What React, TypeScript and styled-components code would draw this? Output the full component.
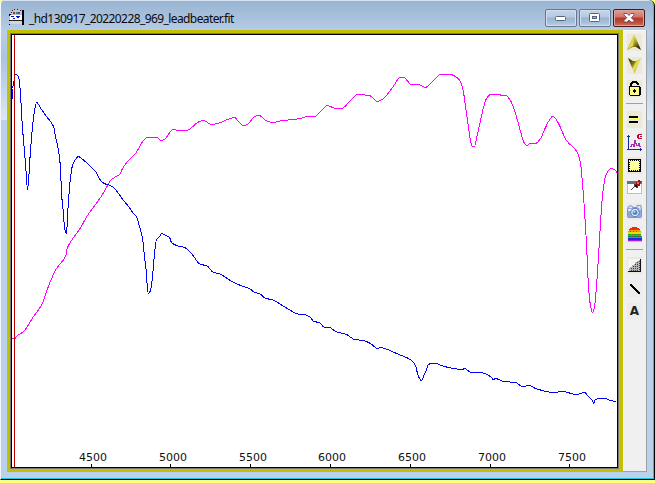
import React from 'react';
import styled, { createGlobalStyle } from 'styled-components';

const GlobalStyle = createGlobalStyle`
  html, body { margin: 0; padding: 0; }
  body { width: 655px; height: 483px; overflow: hidden; background: #ffff80; }
  svg { display: block; }
`;

const Desktop = styled.div`
  box-sizing: border-box;
  width: 655px;
  height: 483px;
  background: #ffff7c;
`;

const WindowFrame = styled.section`
  box-sizing: border-box;
  width: 655px;
  height: 480px;
  display: flex;
  flex-direction: column;
  padding: 0 6px 0 6px;
  border-left: 1px solid #f3f7fb;
  border-right: 1px solid #000;
  border-bottom: 1px solid #000;
  border-radius: 4px 6px 0 0;
  background: linear-gradient(#98b4d1 0, #a9c1dd 18px, #b8cee8 32px, #a9c4e1 58px, #dce7f4 120px, #b9d1ea 120px);
  box-shadow: inset -1px -1px #1dc4e6, inset 0 1px #d7e3f0;
`;

const TitleBar = styled.header`
  display: flex;
  align-items: flex-start;
  height: 30px;
  box-sizing: border-box;
  padding: 9px 3px 0 2px;
`;

const Title = styled.h1`
  flex: 1;
  margin: 1px 0 0 5px;
  font: 400 12px/18px "Noto Sans", "Open Sans", sans-serif;
  letter-spacing: -0.59px;
  color: #0a0a0a;
  white-space: nowrap;
`;

const Controls = styled.div`
  display: flex;
  gap: 2px;
`;

const ControlButton = styled.button<{ $danger?: boolean }>`
  width: 32px;
  height: 18px;
  padding: 0;
  box-sizing: border-box;
  display: flex;
  align-items: center;
  justify-content: center;
  border: 1px solid ${p => (p.$danger ? '#46171d' : '#66788f')};
  border-radius: 2px;
  background: ${p => p.$danger
    ? 'linear-gradient(#dfa093 0, #cf7568 7px, #b33b2a 8px, #bb4b36 12px, #cc7558 100%)'
    : 'linear-gradient(#c5d6ea 0, #b5c9e0 7px, #9bb5d1 8px, #a5bed9 12px, #bdd1e8 100%)'};
  box-shadow: inset 0 0 0 1px ${p => (p.$danger ? '#e0a29a' : '#d0deed')};
`;

const Content = styled.main`
  display: flex;
  height: 442px;
`;

const PlotFrame = styled.div`
  box-sizing: border-box;
  width: 616px;
  height: 442px;
  border: solid #c2c000;
  border-width: 3px 4px 3px 3px;
`;

const PlotBevel = styled.div`
  box-sizing: border-box;
  height: 436px;
  border: 1px solid #777;
`;

const PlotArea = styled.div`
  box-sizing: border-box;
  height: 434px;
  border: 1px solid #000;
  background: #fff;
`;

const ToolStrip = styled.nav`
  box-sizing: border-box;
  width: 24px;
  height: 442px;
  padding-top: 1px;
  display: flex;
  flex-direction: column;
  background: #f0f0f0;
  border-right: 1px solid #a0a0a0;
  border-bottom: 1px solid #a0a0a0;
  box-shadow: inset 1px 1px #fafafa;
`;

const ToolButton = styled.button`
  width: 23px;
  height: 23px;
  flex: none;
  margin: 0;
  padding: 3px 4px;
  border: 0;
  background: none;
`;

const ToolSeparator = styled.div`
  height: 1px;
  margin: 3px 3px 4px 3px;
  background: #a0a0a0;
`;

const continuum =
  '11,338 14,338 17,335 23,331 33,316 42,303 46,291 52,276 56,268 65,256 67,247 71,240 79,229 87,215 100,197 106,187 110,180 114,177 119,174 122,168 128,160 135,153 143,140 147,137 156,137 161,140 165,138 170,131 173,129 178,130 186,130 190,128 197,122 203,120 211,124 220,122 227,119 234,117 238,121 243,125 247,124 254,116 259,115 265,120 272,122 282,120 293,119 300,118 307,116 314,116 320,111 327,105 330,106 335,108 341,108 350,100 357,94 369,95 377,101 380,100 385,96 392,87 400,77 403,77 411,84 418,84 425,87 428,85 435,78 440,74 450,74 455,76 460,81 463,92 465,106 468,127 470,140 472,146 474,146 476,138 480,120 483,107 486,98 490,94 499,94 501,95 505,95 510,100 515,113 520,131 523,141 526,145 530,143 535,143 540,138 545,127 548,121 552,116 555,118 559,125 566,140 577,152 580,163 582,183 584,210 586,243 588,286 590,305 592,312 594,306 596,286 598,256 600,223 602,195 605,176 608,170 610,168 614,169 617,173';

const spectrum =
  '12,88 13,83 15,74 18,76 20,93 21,113 23,140 25,163 27,189 28,180 30,150 32,126 34,110 36,102 41,109 46,116 53,126 55,136 58,150 60,167 61,193 63,213 64,227 66,233 67,217 68,200 70,177 72,165 75,159 78,156 81,158 87,163 95,171 101,181 106,184 110,185 114,188 123,200 128,206 133,213 136,216 139,226 142,238 144,256 146,273 147,290 148,293 150,290 152,276 154,253 156,239 159,236 161,233 165,235 169,237 171,242 176,245 184,247 191,253 200,264 206,265 213,272 218,273 233,282 243,286 249,288 254,292 259,293 265,298 271,299 285,307 300,314 303,314 310,317 313,321 319,322 324,327 329,327 335,331 346,334 354,339 363,340 370,343 377,348 380,347 387,349 396,353 408,358 412,361 415,365 417,373 419,378 421,380 423,376 426,369 428,364 431,363 435,363 441,365 448,367 462,369 464,368 466,369 471,372 480,372 490,376 493,379 495,378 503,381 515,382 522,386 529,385 535,388 553,392 562,391 576,394 580,393 584,392 588,396 592,400 593,403 595,399 599,398 605,398 610,400 616,401';

/** Monotone cubic interpolation through points of increasing x. */
function smoothPath(points: string) {
  const p = points.split(' ').map(s => s.split(',').map(Number));
  const slope = p.slice(1).map((q, i) => (q[1] - p[i][1]) / (q[0] - p[i][0]));
  const tangent = p.map((_, i) => {
    if (i === 0) return slope[0];
    if (i === p.length - 1) return slope[i - 1];
    const a = slope[i - 1];
    const b = slope[i];
    return a * b <= 0 ? 0 : (2 * a * b) / (a + b);
  });
  let d = `M${p[0][0]} ${p[0][1]}`;
  for (let i = 1; i < p.length; i++) {
    const h = (p[i][0] - p[i - 1][0]) / 3;
    d += `C${p[i - 1][0] + h} ${p[i - 1][1] + h * tangent[i - 1]} ${p[i][0] - h} ${p[i][1] - h * tangent[i]} ${p[i][0]} ${p[i][1]}`;
  }
  return d;
}

const ticks = [
  { label: '4500', x: 91, text: 79 },
  { label: '5000', x: 170, text: 159 },
  { label: '5500', x: 250, text: 239 },
  { label: '6000', x: 330, text: 318 },
  { label: '6500', x: 410, text: 398 },
  { label: '7000', x: 490, text: 478 },
  { label: '7500', x: 569, text: 558 },
];

const Chart = styled.svg`
  text {
    font: 11px "DejaVu Sans", sans-serif;
    fill: #111;
  }
`;

function SpectrumChart() {
  return (
    <Chart width="605" height="432" viewBox="12 35 605 432">
      <g shapeRendering="crispEdges" fill="none" transform="translate(.5 .5)">
        <path d={smoothPath(continuum)} stroke="#f0f" />
        <path d={'M12 98V88' + smoothPath(spectrum)} stroke="#00f" />
        <path d="M14 34V467" stroke="#c00000" />
        {ticks.map(t => <path key={t.label} d={`M${t.x} 463.5V467`} stroke="#000" />)}
      </g>
      {ticks.map(t => <text key={t.label} x={t.text} y="461">{t.label}</text>)}
    </Chart>
  );
}

function AppIcon() {
  return (
    <svg width="15" height="16" viewBox="0 0 15 16" shapeRendering="crispEdges">
      <path d="M3 1h9l2 4H1z" fill="#c9c9c9" />
      <path d="M3 1h1v1H3zM5 0h1v1H5zM8 0h1v1H8zM11 1h1v1h-1zM2 3h1v1H2z" fill="#222" />
      <path d="M4 3h2v2H4z" fill="#d02020" />
      <path d="M6 3h1v2H6z" fill="#e0d000" />
      <path d="M7 3h2v2H7z" fill="#20a040" />
      <path d="M9 3h2v2H9z" fill="#a020c0" />
      <path d="M0 5h2v1H0zM13 1h2v15h-2z" fill="#000" />
      <path d="M0 6h1v1H0zM0 11h1v1H0zM0 15h1v1H0z" fill="#000" />
      <path d="M1 6h12v5H1z" fill="#fff" />
      <path d="M1 11h12v1H1z" fill="#222" />
      <path d="M1 12h12v3H1z" fill="#d5d5d5" />
      <path d="M2 7h3v1H2zM7 7h4v1H7zM4 9h2v1H4zM8 8h2v1H8z" fill="#0010d0" />
    </svg>
  );
}

function Icon({ children, tile }: { children: React.ReactNode; tile?: string }) {
  return (
    <svg width="15" height="17" viewBox="0 0 15 17" shapeRendering="crispEdges">
      {tile && <rect width="15" height="17" fill={tile} />}
      {children}
    </svg>
  );
}

const warm = '#ece9d8';

const ArrowUpIcon = () => (
  <Icon tile={warm}>
    <defs>
      <linearGradient id="arrowUp" x1="0" y1="0" x2="1" y2="1">
        <stop offset=".2" stopColor="#f5f27a" /><stop offset=".55" stopColor="#aaa02c" /><stop offset=".85" stopColor="#292400" />
      </linearGradient>
    </defs>
    <path d="M7 0L14 16L9 13H6L0 16Z" fill="url(#arrowUp)" shapeRendering="auto" />
    <path d="M7 1L1 15L6 12Z" fill="#e0d84c" shapeRendering="auto" />
  </Icon>
);

const ArrowDownIcon = () => (
  <Icon tile={warm}>
    <defs>
      <linearGradient id="arrowDown" x1="0" y1="0" x2="1" y2=".7">
        <stop offset=".1" stopColor="#3a3500" /><stop offset=".45" stopColor="#80781c" /><stop offset=".6" stopColor="#eee64d" /><stop offset="1" stopColor="#a49b35" />
      </linearGradient>
    </defs>
    <path d="M1 1L6 4H9L14 1L7.5 16.5Z" fill="url(#arrowDown)" shapeRendering="auto" />
  </Icon>
);

const LockIcon = () => (
  <Icon tile={warm}>
    <path d="M4 6V4L6 2H9L11 4V5" fill="none" stroke="#000" strokeWidth="1.6" />
    <path d="M2 6h11v1h1v8h-1v1H3v-1H2z" fill="#000" />
    <path d="M3 7h9v8H3z" fill="#ff8" />
    <path d="M7 9h1v1h1v2H8v1H7v-1H6v-2h1z" fill="#000" />
  </Icon>
);

const EqualsIcon = () => (
  <Icon tile={warm}>
    <path d="M3 7h9v1H3zM3 12h9v1H3z" fill="#ff6" />
    <path d="M2 5h9v2H2zM2 10h9v2H2z" fill="#000" />
  </Icon>
);

const PlotIcon = () => (
  <Icon>
    <path d="M1.5 1V16M0 15.5H15M0 2.5H3M13.5 14v3" fill="none" stroke="#142a9c" />
    <path d="M3 12.5H4.5V10.5H6V12H7.5V6H8.5V9.5H9.5V11H11V9.5H12V12H14" fill="none" stroke="#b028b0" />
    <path d="M11 0h4v1h-3v3h3v1h-4V4h-1V1h1z" fill="#c00030" />
    <path d="M13 2h2v1h-2z" fill="#c00030" />
  </Icon>
);

const SelectIcon = () => (
  <Icon tile={warm}>
    <path d="M1 2h13v13H1z" fill="#000" />
    <path d="M2 3h11v11H2z" fill="#ff9" />
    <path d="M2.5 3.5H12.5V13.5H2.5Z" fill="none" stroke="#000" strokeDasharray="1 1" />
  </Icon>
);

const PinIcon = () => (
  <Icon>
    <path d="M0 1h15v13H0z" fill="#c0c0c0" />
    <path d="M0 1h15v3H0z" fill="#5f7483" />
    <path d="M1 4h13v9H1z" fill="#fff" />
    <path d="M4 10L8 6" stroke="#444" />
    <path d="M7 4h2V2h2V0h2v1h1v2h-1v3h-2v2H9V7H8V6H7z" fill="#981818" />
    <path d="M10 2h2v2h-2z" fill="#eb6464" />
    <path d="M8 5h2v2H8z" fill="#350505" />
  </Icon>
);

const CameraIcon = () => (
  <Icon tile="#ebebed">
    <g shapeRendering="auto">
      <rect x=".5" y="4.5" width="14" height="10" rx="1" fill="#91a9df" stroke="#8292cc" />
      <path d="M1 5L2 3H5L6 5M10 5V2.5H14V5" fill="#dbe6ff" stroke="#8996c8" />
      <path d="M1 6H6V8H1Z" fill="#dce8ff" />
      <circle cx="8" cy="9.5" r="4.2" fill="#e4edfa" stroke="#6475aa" />
      <circle cx="8" cy="9.5" r="2.5" fill="#4d87bd" />
      <circle cx="7.4" cy="8.7" r="1.1" fill="#a4e2f5" />
      <circle cx="13" cy="6" r=".8" fill="#fff" />
    </g>
  </Icon>
);

const RainbowIcon = () => (
  <Icon tile="#ebebeb">
    <path d="M5 1h5v1h2v1h1v1H2V3h1V2h2z" fill="#e52c18" />
    <path d="M2 4h11v1h1v1H1V5h1z" fill="#f9a000" />
    <path d="M1 6h13v2H1z" fill="#e4df00" />
    <path d="M1 8h13v2H1z" fill="#26bc3a" />
    <path d="M1 10h14v1H1z" fill="#168c54" />
    <path d="M1 11h14v1H1z" fill="#00afe8" />
    <path d="M1 12h14v2H1z" fill="#1630ea" />
    <path d="M1 14h14v1H1z" fill="#a020dc" />
    <path d="M1 15h14v1H1z" fill="#e4a5e9" />
    <path d="M3 5.5H12M2 8.5H13M2 10.5H13" stroke="#695c37" strokeDasharray="1 2" />
  </Icon>
);

const DitherIcon = () => (
  <Icon tile={warm}>
    <path d="M1 2h13v13H1z" fill="#f5f5f5" />
    <path d="M13 3V14H2V11H3V10H5V8H7V7H8V5H10V4H12V3Z" fill="#b2b2b2" />
    <path d="M12.5 4V14M10.5 5V14M8.5 7V14M6.5 9V14M4.5 11V14" stroke="#444" strokeDasharray="1 1" />
    <path d="M13.5 2V15M1 14.5H14" stroke="#111" />
  </Icon>
);

const LineIcon = () => (
  <Icon tile="#ececec">
    <path d="M3 4h2v1h1v1h1v1h1v1h1v1h1v1h1v1h1v1h1v2h-2v-1h-1v-1H9v-1H8v-1H7V9H6V8H5V7H4V6H3z" fill="#000" />
  </Icon>
);

const Letter = styled.span`
  display: block;
  width: 15px;
  height: 17px;
  background: #ececec;
  color: #222;
  text-align: center;
  font: 700 12px/17px "DejaVu Sans", sans-serif;
`;

export default function App() {
  return (
    <Desktop>
      <GlobalStyle />
      <WindowFrame>
        <TitleBar>
          <AppIcon />
          <Title>_hd130917_20220228_969_leadbeater.fit</Title>
          <Controls>
            <ControlButton aria-label="Minimize">
              <svg width="12" height="6" viewBox="0 0 12 6"><rect x=".5" y="1.5" width="10" height="4" rx="1" fill="#fff" stroke="#566579" /></svg>
            </ControlButton>
            <ControlButton aria-label="Restore">
              <svg width="12" height="10" viewBox="0 0 12 10"><rect x=".5" y=".5" width="10" height="8" rx="1" fill="#fff" stroke="#566579" /><rect x="3.5" y="3.5" width="4" height="2" fill="#9bb5d1" stroke="#566579" /></svg>
            </ControlButton>
            <ControlButton $danger aria-label="Close">
              <svg width="12" height="10" viewBox="0 0 12 10"><path d="M1 .5H4L6 2.5L8 .5H11V2L8.3 4.7L11 7.5V9H8L6 7L4 9H1V7.5L3.7 4.7L1 2Z" fill="#fff" stroke="#673e4b" strokeWidth=".8" /></svg>
            </ControlButton>
          </Controls>
        </TitleBar>
        <Content>
          <PlotFrame><PlotBevel><PlotArea><SpectrumChart /></PlotArea></PlotBevel></PlotFrame>
          <ToolStrip>
            <ToolButton><ArrowUpIcon /></ToolButton>
            <ToolButton><ArrowDownIcon /></ToolButton>
            <ToolButton><LockIcon /></ToolButton>
            <ToolSeparator />
            <ToolButton><EqualsIcon /></ToolButton>
            <ToolButton><PlotIcon /></ToolButton>
            <ToolButton><SelectIcon /></ToolButton>
            <ToolButton><PinIcon /></ToolButton>
            <ToolButton><CameraIcon /></ToolButton>
            <ToolButton><RainbowIcon /></ToolButton>
            <ToolSeparator />
            <ToolButton><DitherIcon /></ToolButton>
            <ToolButton><LineIcon /></ToolButton>
            <ToolButton><Letter>A</Letter></ToolButton>
          </ToolStrip>
        </Content>
      </WindowFrame>
    </Desktop>
  );
}
